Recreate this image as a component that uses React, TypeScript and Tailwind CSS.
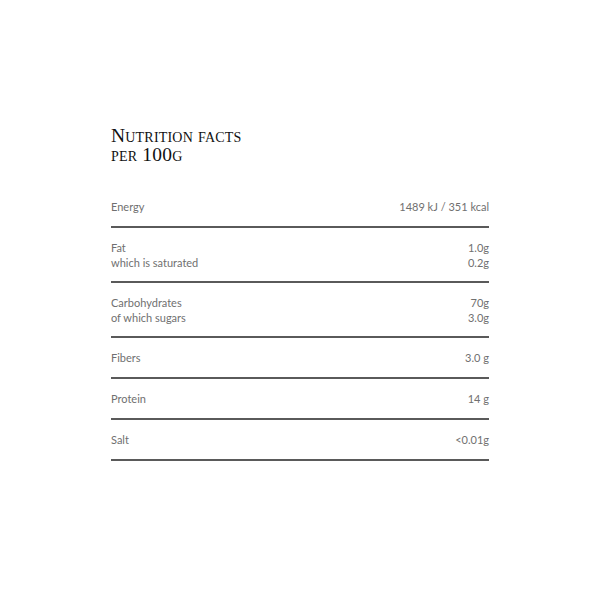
import React from "react";

type Row = { labels: string[]; values: string[] };

const rows: Row[] = [
  { labels: ["Energy"], values: ["1489 kJ / 351 kcal"] },
  { labels: ["Fat", "which is saturated"], values: ["1.0g", "0.2g"] },
  { labels: ["Carbohydrates", "of which sugars"], values: ["70g", "3.0g"] },
  { labels: ["Fibers"], values: ["3.0 g"] },
  { labels: ["Protein"], values: ["14 g"] },
  { labels: ["Salt"], values: ["<0.01g"] },
];

export default function App() {
  return (
    <div className="w-[600px] h-[600px] bg-white flex justify-center">
      <div className="w-[378px] pt-[126px]">
        <h2
          className="text-[19.5px] leading-[19px] text-[#111] [font-variant:small-caps] tracking-[0.2px]"
          style={{ fontFamily: '"Liberation Serif", serif' }}
        >
          Nutrition facts
          <br />
          per 100g
        </h2>
        <div
          className="mt-[23px] text-[11px] leading-[15px] text-[#707070]"
          style={{ fontFamily: 'Lato, "Open Sans", sans-serif' }}
        >
          {rows.map((r) => (
            <div
              key={r.labels[0]}
              className={
                r.labels.length > 1
                  ? "flex justify-between pt-[12px] pb-[11px] border-b-2 border-[#5a5a5a]"
                  : "flex justify-between py-[12px] border-b-2 border-[#5a5a5a]"
              }
            >
              <div className="flex flex-col">
                {r.labels.map((l) => (
                  <span key={l}>{l}</span>
                ))}
              </div>
              <div className="flex flex-col items-end">
                {r.values.map((v) => (
                  <span key={v}>{v}</span>
                ))}
              </div>
            </div>
          ))}
        </div>
      </div>
    </div>
  );
}
